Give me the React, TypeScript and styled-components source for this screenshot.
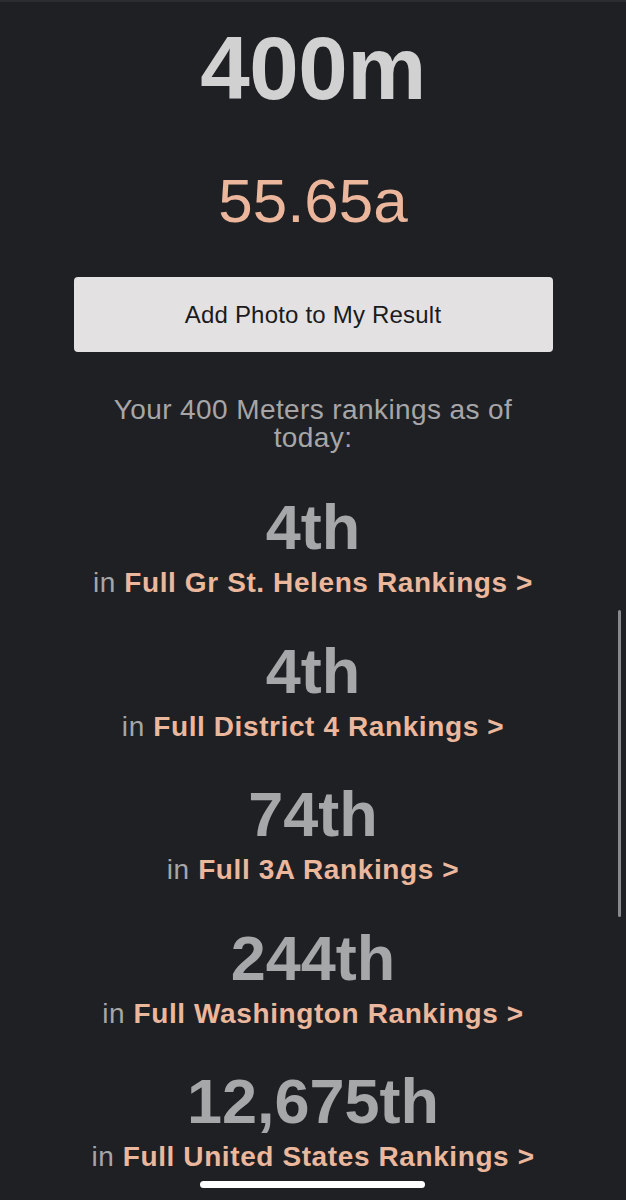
import styled, { createGlobalStyle } from 'styled-components';

const GlobalStyle = createGlobalStyle`
  html, body {
    margin: 0;
    padding: 0;
    background: #1f2023;
  }

  body {
    font-family: "Liberation Sans", Arial, Helvetica, sans-serif;
    -webkit-font-smoothing: antialiased;
  }
`;

const rankings = [
  { place: '4th', label: 'Full Gr St. Helens Rankings >' },
  { place: '4th', label: 'Full District 4 Rankings >' },
  { place: '74th', label: 'Full 3A Rankings >' },
  { place: '244th', label: 'Full Washington Rankings >' },
  { place: '12,675th', label: 'Full United States Rankings >' },
];

export default function App() {
  return (
    <>
      <GlobalStyle />
      <Screen>
        <TopEdge />
        <Content>
          <EventTitle>400m</EventTitle>
          <ResultMark>55.65a</ResultMark>
          <PhotoButton type="button">Add Photo to My Result</PhotoButton>
          <RankingsIntro>Your 400 Meters rankings as of today:</RankingsIntro>

          <RankList>
            {rankings.map((r) => (
              <RankBlock key={r.label}>
                <RankPlace>{r.place}</RankPlace>
                <RankLink>
                  <InWord>in </InWord>
                  <LinkText>{r.label}</LinkText>
                </RankLink>
              </RankBlock>
            ))}
          </RankList>
        </Content>

        <ScrollIndicator />
        <HomeIndicator />
      </Screen>
    </>
  );
}

const Screen = styled.div`
  width: 100%;
  min-height: 1200px;
  height: 1200px;
  overflow: hidden;
  position: relative;
  background: #1f2023;
`;

const TopEdge = styled.div`
  height: 2px;
  background: #2c2d30;
`;

const Content = styled.div`
  display: flex;
  flex-direction: column;
  align-items: center;
  padding-top: 22px;
  text-align: center;
`;

const EventTitle = styled.div`
  color: #d1d1d2;
  font-size: 89px;
  font-weight: 700;
  line-height: 89px;
  letter-spacing: -0.5px;
`;

const ResultMark = styled.div`
  margin-top: 57px;
  color: #ebb69c;
  font-size: 62px;
  font-weight: 400;
  line-height: 62px;
`;

const PhotoButton = styled.button`
  margin-top: 45px;
  width: 479px;
  height: 75px;

  border: none;
  border-radius: 4px;
  background: #e4e1e3;

  color: #1b1b1d;
  font-family: inherit;
  font-size: 24px;
  letter-spacing: 0.2px;
  cursor: pointer;
`;

const RankingsIntro = styled.div`
  margin-top: 44px;
  max-width: 470px;
  color: #a6a6a9;
  font-size: 28px;
  line-height: 28px;
  letter-spacing: 0.4px;
`;

const RankList = styled.div`
  margin-top: 44px;
  display: flex;
  flex-direction: column;
  align-items: center;
  gap: 39.5px;
`;

const RankBlock = styled.div`
  display: flex;
  flex-direction: column;
  align-items: center;
  gap: 7px;
`;

const RankPlace = styled.div`
  color: #a6a7a9;
  font-size: 63px;
  font-weight: 700;
  line-height: 63px;
`;

const RankLink = styled.div`
  font-size: 28px;
  line-height: 34px;
  letter-spacing: 0.6px;
  white-space: nowrap;
`;

const InWord = styled.span`
  color: #a6a6a9;
  font-weight: 400;
`;

const LinkText = styled.span`
  color: #ebb79d;
  font-weight: 700;
`;

const ScrollIndicator = styled.div`
  position: absolute;
  top: 610px;
  right: 5px;
  width: 3px;
  height: 307px;
  border-radius: 2px;
  background: #88898c;
`;

const HomeIndicator = styled.div`
  position: absolute;
  left: 200px;
  bottom: 12px;
  width: 225px;
  height: 7px;
  border-radius: 4px;
  background: #ffffff;
`;
